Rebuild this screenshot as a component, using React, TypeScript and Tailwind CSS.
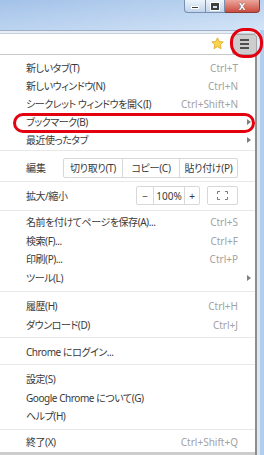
import React from 'react';

type Item = { label: string; shortcut?: string; sub?: boolean; h: string };

const Arrow = () => (
  <svg width="4" height="6" viewBox="0 0 4 6">
    <path d="M0 0 L4 3 L0 6 Z" fill="#7f7f7f" />
  </svg>
);

const Row = ({ label, shortcut, sub, h }: Item) => (
  <div className={`flex items-center pl-[26px] ${h}`}>
    <span className="flex-1 text-[#3a3a3a] whitespace-nowrap tracking-[-0.45px]">{label}</span>
    {shortcut && <span className="text-[#a2a2a2] whitespace-nowrap">{shortcut}</span>}
    <span className="w-[17px] flex items-center pl-[9px]">{sub && <Arrow />}</span>
  </div>
);

const Sep = ({ m }: { m: string }) => <div className={`h-px bg-[#e8e8e8] ${m}`} />;

const Star = () => (
  <svg width="13" height="13" viewBox="0 0 24 24">
    <path
      d="M12 1.5l3.2 6.7 7.3.9-5.4 5.1 1.4 7.3L12 17.9l-6.5 3.6 1.4-7.3L1.5 9.1l7.3-.9z"
      fill="#fad54c"
      stroke="#d9a21d"
      strokeWidth="1.4"
      strokeLinejoin="round"
    />
  </svg>
);

const Fullscreen = () => (
  <svg width="11" height="9" viewBox="0 0 11 9" fill="none" stroke="#7a7a7a" strokeWidth="1">
    <path d="M0.5 3V0.5H3M8 0.5h2.5V3M10.5 6v2.5H8M3 8.5H0.5V6" />
  </svg>
);

export default function App() {
  return (
    <div className="w-[264px] h-[455px] overflow-hidden bg-white flex flex-col relative font-['Noto_Sans','Noto_Sans_CJK_JP',sans-serif] text-[10px] leading-none [font-feature-settings:'palt']">
      {/* title bar */}
      <div className="h-[30px] bg-linear-to-br from-[#a3c2e8] to-[#d3e4f7] flex justify-end items-start pr-[4px]">
        <div className="w-[22px] h-[13px] border border-t-0 border-[#7890ad] rounded-bl-[4px] bg-linear-to-b from-[#eef4fb] to-[#c0d3ea] flex items-end justify-center pb-[3px]">
          <div className="w-[8px] h-[3px] bg-[#3a3a3a] border border-white" />
        </div>
        <div className="w-[19px] h-[13px] border border-t-0 border-l-0 border-[#7890ad] bg-linear-to-b from-[#eef4fb] to-[#c0d3ea] flex items-center justify-center">
          <div className="w-[8px] h-[7px] border-2 border-t-[3px] border-[#3f3f3f] outline outline-1 outline-white" />
        </div>
        <div className="w-[35px] h-[13px] border border-t-0 border-l-0 border-[#8b3b34] rounded-br-[4px] bg-linear-to-b from-[#eaa69c] to-[#c94b3f] flex items-center justify-center">
          <span className="text-white font-bold text-[12px] leading-none font-['Liberation_Sans',sans-serif] [text-shadow:0_0_1px_#3a1a16]">x</span>
        </div>
      </div>

      {/* toolbar */}
      <div className="flex flex-1">
        <div className="w-[257px] flex flex-col">
          <div className="border-t border-[#9fb0c6] h-[3px] bg-[#e6edf6]" />
          <div className="h-[22px] border-t border-b border-t-[#c6d0dc] border-b-[#c9c9c9] bg-white flex items-center justify-end">
            <div className="mr-[8px] mb-[1px]">
              <Star />
            </div>
            <div className="w-[25px] h-[21px] rounded-[3px] bg-[#cdcdcd] border border-[#a5a5a5] flex flex-col items-center justify-center gap-[2px]">
              <div className="w-[9px] h-[2px] bg-[#4f4f4f]" />
              <div className="w-[9px] h-[2px] bg-[#4f4f4f]" />
              <div className="w-[9px] h-[2px] bg-[#4f4f4f]" />
            </div>
          </div>

          {/* menu */}
          <div className="flex-1 border-r-2 border-[#8e8e8e] pt-[4px]">
            <Row label="新しいタブ(T)" shortcut="Ctrl+T" h="h-[18px]" />
            <Row label="新しいウィンドウ(N)" shortcut="Ctrl+N" h="h-[18px]" />
            <Row label="シークレット ウィンドウを開く(I)" shortcut="Ctrl+Shift+N" h="h-[18px]" />
            <div className="relative">
              <Row label="ブックマーク(B)" sub h="h-[18px]" />
              <div className="absolute left-[13px] right-0 top-0 h-[20px] border-[3px] border-[#e3000f] rounded-full" />
            </div>
            <Row label="最近使ったタブ" sub h="h-[18px]" />
            <Sep m="mt-[1px]" />

            <div className="flex items-center pl-[26px] pt-[7px] pb-[3px]">
              <span className="w-[37px] text-[#3a3a3a]">編集</span>
              <div className="flex h-[20px] border border-[#d8d8d8] rounded-[2px] text-[#3a3a3a] tracking-[-0.3px]">
                <div className="w-[59px] flex items-center justify-center border-r border-[#d8d8d8]">切り取り(T)</div>
                <div className="w-[57px] flex items-center justify-center border-r border-[#d8d8d8]">コピー(C)</div>
                <div className="w-[57px] flex items-center justify-center">貼り付け(P)</div>
              </div>
            </div>
            <Sep m="" />

            <div className="flex items-center pl-[26px] pt-[4px] pb-[5px]">
              <span className="flex-1 text-[#3a3a3a] tracking-[-0.45px]">拡大/縮小</span>
              <div className="flex h-[19px] border border-[#d8d8d8] rounded-[2px] text-[#3a3a3a]">
                <div className="w-[17px] flex items-center justify-center border-r border-[#d8d8d8]">−</div>
                <div className="w-[31px] flex items-center justify-center border-r border-[#d8d8d8]">100%</div>
                <div className="w-[14px] flex items-center justify-center">+</div>
              </div>
              <div className="ml-[7px] mr-[17px] w-[31px] h-[19px] border border-[#d8d8d8] rounded-[2px] flex items-center justify-center">
                <Fullscreen />
              </div>
            </div>
            <Sep m="mb-[2px]" />

            <Row label="名前を付けてページを保存(A)..." shortcut="Ctrl+S" h="h-[18px]" />
            <Row label="検索(F)..." shortcut="Ctrl+F" h="h-[19px]" />
            <Row label="印刷(P)..." shortcut="Ctrl+P" h="h-[18px]" />
            <Row label="ツール(L)" sub h="h-[19px]" />
            <Sep m="mt-[4px] mb-[5px]" />

            <Row label="履歴(H)" shortcut="Ctrl+H" h="h-[18px]" />
            <Row label="ダウンロード(D)" shortcut="Ctrl+J" h="h-[19px]" />
            <Sep m="mt-[3px] mb-[5px]" />

            <Row label="Chrome にログイン..." h="h-[18px]" />
            <Sep m="mt-[3px] mb-[5px]" />

            <Row label="設定(S)" h="h-[18px]" />
            <Row label="Google Chrome について(G)" h="h-[19px]" />
            <Row label="ヘルプ(H)" h="h-[18px]" />
            <Sep m="mt-[4px] mb-[3px]" />

            <Row label="終了(X)" shortcut="Ctrl+Shift+Q" h="h-[18px]" />
            <div className="h-[1px]" />
            <div className="h-[3px] bg-[#cdcdcd]" />
          </div>
        </div>
        {/* window frame */}
        <div className="flex-1 flex">
          <div className="w-[3px] bg-[#dbe8f7]" />
          <div className="flex-1 bg-[#b3cdec]" />
        </div>
      </div>

      {/* annotation ring around menu button */}
      <div className="absolute left-[230px] top-[28px] w-[33px] h-[30px] border-[3px] border-[#e3000f] rounded-[14px]" />
    </div>
  );
}
